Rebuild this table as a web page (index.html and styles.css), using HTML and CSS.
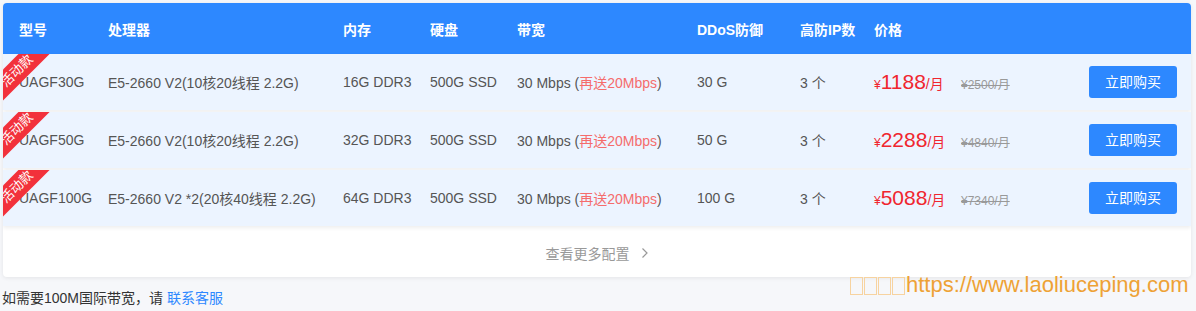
FILE: index.html
```html
<!DOCTYPE html>
<html lang="zh-CN">
<head>
<meta charset="utf-8">
<link rel="stylesheet" href="styles.css">
</head>
<body>
<div class="card">
  <div class="head grid">
    <div>型号</div><div>处理器</div><div>内存</div><div>硬盘</div><div>带宽</div><div>DDoS防御</div><div>高防IP数</div><div>价格</div><div></div>
  </div>
  <div class="row grid">
    <div class="ribbon">活动款</div>
    <div>UAGF30G</div><div>E5-2660 V2(10核20线程 2.2G)</div><div>16G DDR3</div><div>500G SSD</div>
    <div>30 Mbps (<span class="red">再送20Mbps</span>)</div><div>30 G</div><div>3 个</div>
    <div class="price"><span class="now"><span class="yen">¥</span><span class="num">1188</span><span class="per">/月</span></span><del class="old">¥2500/月</del></div>
    <div><a class="buy">立即购买</a></div>
  </div>
  <div class="row grid">
    <div class="ribbon">活动款</div>
    <div>UAGF50G</div><div>E5-2660 V2(10核20线程 2.2G)</div><div>32G DDR3</div><div>500G SSD</div>
    <div>30 Mbps (<span class="red">再送20Mbps</span>)</div><div>50 G</div><div>3 个</div>
    <div class="price"><span class="now"><span class="yen">¥</span><span class="num">2288</span><span class="per">/月</span></span><del class="old">¥4840/月</del></div>
    <div><a class="buy">立即购买</a></div>
  </div>
  <div class="row grid">
    <div class="ribbon">活动款</div>
    <div>UAGF100G</div><div>E5-2660 V2 *2(20核40线程 2.2G)</div><div>64G DDR3</div><div>500G SSD</div>
    <div>30 Mbps (<span class="red">再送20Mbps</span>)</div><div>100 G</div><div>3 个</div>
    <div class="price"><span class="now"><span class="yen">¥</span><span class="num">5088</span><span class="per">/月</span></span><del class="old">¥7340/月</del></div>
    <div><a class="buy">立即购买</a></div>
  </div>
  <div class="more">查看更多配置
    <svg class="chev" width="8" height="12" viewBox="0 0 8 12"><path d="M1.5 1.5 L6 6 L1.5 10.5" fill="none" stroke="#999" stroke-width="1.2"/></svg>
  </div>
</div>
<p class="note">如需要100M国际带宽，请 <a class="link">联系客服</a></p>
<div class="mark"><span class="box"></span><span class="box"></span><span class="box"></span><span class="box"></span>https://www.laoliuceping.com</div>
</body>
</html>
```
FILE: styles.css
```css
html, body { margin: 0; padding: 0; }
body {
  background: #f6f7fa;
  font-family: "Liberation Sans", "Noto Sans CJK SC", sans-serif;
  font-size: 14px;
  color: #555;
  position: relative;
  height: 311px;
  overflow: hidden;
}
.card {
  margin: 3px 5px 0 3px;
  background: #fff;
  border-radius: 4px;
  box-shadow: 0 1px 4px rgba(0,0,0,0.08);
  overflow: hidden;
}
.grid {
  display: grid;
  grid-template-columns: 89px 235px 87px 87px 180px 103px 74px 1fr auto;
  align-items: center;
  padding: 0 14px 0 16px;
}
.head {
  background: #2d88ff;
  color: #fff;
  font-weight: bold;
  height: 51px;
}
.row {
  position: relative;
  overflow: hidden;
  background: #ecf4ff;
  height: 56px;
  margin-bottom: 2px;
  box-shadow: 0 2px 4px rgba(0,0,0,0.07);
}
.ribbon {
  position: absolute;
  left: -26px;
  top: 6px;
  width: 80px;
  height: 22px;
  line-height: 22px;
  text-align: center;
  background: #f2313b;
  color: #fff;
  font-size: 13px;
  transform: rotate(-45deg);
}
.red { color: #f56c6c; }
.price { display: flex; align-items: baseline; color: #f0262f; }
.now { width: 87px; display: inline-block; }
.yen { font-size: 12px; }
.num { font-size: 21px; }
.per { font-size: 14px; }
.old { color: #999; font-size: 12px; }
.buy {
  display: inline-block;
  width: 88px;
  height: 32px;
  line-height: 32px;
  text-align: center;
  background: #2d88ff;
  color: #fff;
  border-radius: 3px;
  font-size: 14px;
}
.more {
  height: 49px;
  display: flex;
  align-items: center;
  justify-content: center;
  gap: 8px;
  color: #999;
  font-size: 14px;
}
.chev { margin-left: 3px; }
.note {
  margin: 10px 0 0 2px;
  font-size: 14px;
  color: #333;
}
.link { color: #2d88ff; }
.mark {
  position: absolute;
  left: 850px;
  top: 272px;
  font-family: "Liberation Sans", Arial, sans-serif;
  font-size: 22px;
  color: #eea235;
  display: flex;
  align-items: center;
}
.box {
  display: inline-block;
  width: 11px;
  height: 16px;
  border: 1px solid #f7d3a0;
  margin-right: 1px;
  margin-top: 2px;
}
```
